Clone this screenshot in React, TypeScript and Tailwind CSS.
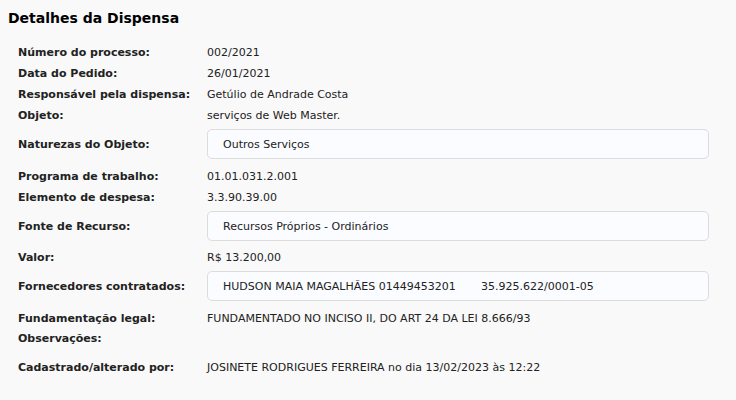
import React from "react";

const Row = ({ label, children, h = "h-[21px]" }: { label: string; children?: React.ReactNode; h?: string }) => (
  <div className={"flex items-center " + h}>
    <div className="w-[189px] shrink-0 pt-[3px] font-bold text-[11px] text-[#222]">{label}</div>
    <div className="pt-[3px] text-[11px] text-[#222]">{children}</div>
  </div>
);

const BoxRow = ({ label, children }: { label: string; children?: React.ReactNode }) => (
  <div className="flex items-start h-[40px] pt-[4px]">
    <div className="w-[189px] h-[30px] shrink-0 flex items-center pt-[2px] font-bold text-[11px] text-[#222]">{label}</div>
    <div className="w-[502px] h-[30px] flex items-center pl-[15px] pt-[2px] bg-[#fafcff] border border-[#dcdcdc] rounded-[5px] text-[11px] text-[#222]">
      {children}
    </div>
  </div>
);

export default function App() {
  return (
    <div
      className="w-[736px] h-[400px] bg-[#f9f9f9] overflow-hidden"
      style={{ fontFamily: '"DejaVu Sans", Verdana, sans-serif' }}
    >
      <div className="pl-[8px] pt-[8px] h-[41px]">
        <h1 className="text-[14px] font-bold text-black leading-[20px]">Detalhes da Dispensa</h1>
      </div>
      <div className="pl-[18px] flex flex-col">
        <Row label="Número do processo:">002/2021</Row>
        <Row label="Data do Pedido:">26/01/2021</Row>
        <Row label="Responsável pela dispensa:">Getúlio de Andrade Costa</Row>
        <Row label="Objeto:">serviços de Web Master.</Row>
        <BoxRow label="Naturezas do Objeto:">Outros Serviços</BoxRow>
        <Row label="Programa de trabalho:">01.01.031.2.001</Row>
        <Row label="Elemento de despesa:">3.3.90.39.00</Row>
        <BoxRow label="Fonte de Recurso:">Recursos Próprios - Ordinários</BoxRow>
        <Row label="Valor:" h="h-[20px]">R$ 13.200,00</Row>
        <BoxRow label="Fornecedores contratados:">
          <span className="inline-block w-[258px]">HUDSON MAIA MAGALHÃES 01449453201</span>
          <span>35.925.622/0001-05</span>
        </BoxRow>
        <Row label="Fundamentação legal:">FUNDAMENTADO NO INCISO II, DO ART 24 DA LEI 8.666/93</Row>
        <Row label="Observações:" h="h-[20px]"></Row>
        <div className="h-[8px]" />
        <Row label="Cadastrado/alterado por:">JOSINETE RODRIGUES FERREIRA no dia 13/02/2023 às 12:22</Row>
      </div>
    </div>
  );
}
